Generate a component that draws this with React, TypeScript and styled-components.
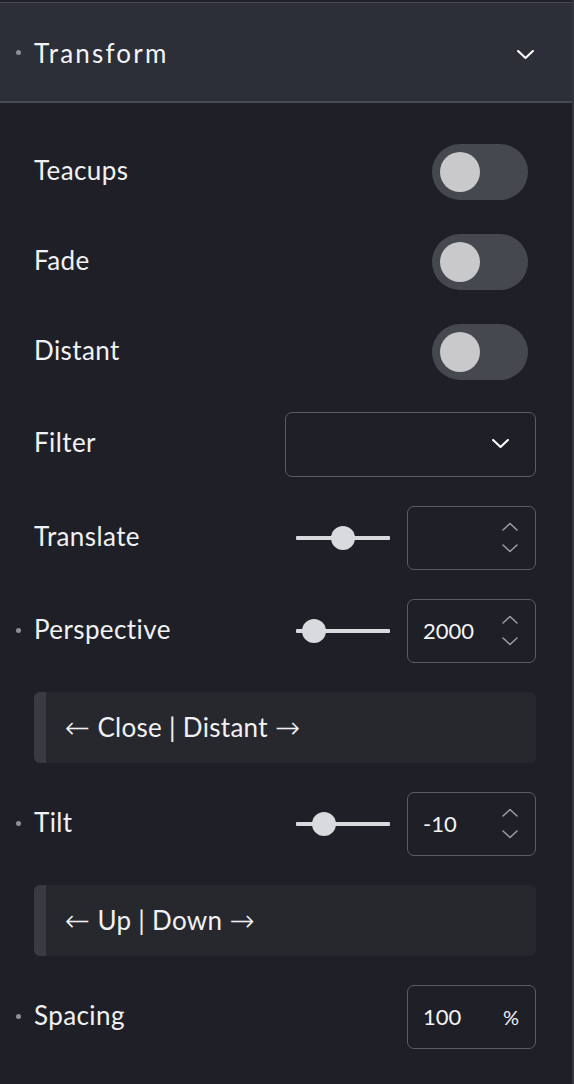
import React from "react";
import styled, { createGlobalStyle } from "styled-components";

const Global = createGlobalStyle`
  html, body { margin: 0; padding: 0; background: #1f2027; }
  body { font-family: Lato, "Noto Sans", sans-serif; color: #f1f1f3; }
  * { box-sizing: border-box; }
`;

const Panel = styled.div`
  width: 574px;
  min-height: 1084px;
  padding-top: 2px;
  background: #1f2027;
  border-right: 2px solid #34363d;
`;

const Header = styled.div`
  height: 101px;
  display: flex;
  align-items: center;
  background: #2c2f37;
  border-top: 1px solid #474a52;
  border-bottom: 2px solid #474a52;
  padding: 0 38px 0 0;
`;

const Bullet = styled.span<{ $hidden?: boolean }>`
  width: 34px;
  display: flex;
  justify-content: center;
  padding-left: 3px;
  flex: none;
  &::before {
    content: "";
    width: 5px;
    height: 5px;
    border-radius: 50%;
    background: ${(p) => (p.$hidden ? "transparent" : "#8e9096")};
  }
`;

const HeaderTitle = styled.span`
  flex: 1;
  font-size: 26px;
  letter-spacing: 2.2px;
  color: #f4f4f6;
  line-height: 1;
  padding-top: 2px;
`;

const HeaderChevron = styled.span`
  display: flex;
  padding-top: 5px;
`;

const Body = styled.div`
  display: flex;
  flex-direction: column;
  gap: 29px;
  padding: 38.5px 36px 0 0;
`;

const Row = styled.div<{ $h?: number }>`
  display: flex;
  align-items: center;
  height: ${(p) => p.$h ?? 64}px;
`;

const Label = styled.span`
  flex: 1;
  font-size: 26px;
  letter-spacing: 0.4px;
  color: #f1f1f3;
  line-height: 1;
  padding-bottom: 4px;
`;

const ToggleTrack = styled.div`
  width: 96px;
  height: 56px;
  margin-right: 8px;
  border-radius: 28px;
  background: #45484f;
  display: flex;
  align-items: center;
  padding-left: 8px;
`;

const ToggleKnob = styled.div`
  width: 40px;
  height: 40px;
  border-radius: 50%;
  background: #c9c9cb;
`;

const Select = styled.div`
  width: 251px;
  height: 65px;
  border: 1.5px solid #5b5d63;
  border-radius: 7px;
  display: flex;
  align-items: center;
  justify-content: flex-end;
  padding-right: 26px;
`;

const SliderWrap = styled.div`
  position: relative;
  width: 94px;
  height: 24px;
  margin-right: 17px;
  display: flex;
  align-items: center;
`;

const SliderTrack = styled.div`
  width: 100%;
  height: 4px;
  background: #d9dadd;
  border-radius: 1px;
`;

const SliderKnob = styled.div`
  position: absolute;
  top: 0;
  width: 24px;
  height: 24px;
  border-radius: 50%;
  background: #d9dadd;
`;

const NumberBox = styled.div`
  width: 129px;
  height: 64px;
  border: 1.5px solid #5b5d63;
  border-radius: 7px;
  display: flex;
  align-items: center;
  padding: 0 16px 0 15px;
`;

const NumberValue = styled.span`
  flex: 1;
  font-size: 22px;
  color: #f4f4f6;
  line-height: 1;
`;

const Unit = styled.span`
  font-size: 20px;
  color: #f1f1f3;
`;

const Spinner = styled.div`
  display: flex;
  flex-direction: column;
  gap: 13px;
  width: 18px;
  align-items: center;
`;

const Note = styled.div`
  margin-left: 34px;
  height: 71px;
  display: flex;
  align-items: center;
  background: #27282d;
  border-radius: 6px;
  border-left: 12px solid #3a3b41;
  padding-left: 19px;
  font-size: 26px;
  letter-spacing: 0.3px;
  color: #f1f1f3;
  white-space: pre;
`;

const Arrow = styled.span`
  font-family: "DejaVu Sans", sans-serif;
  font-weight: 200;
  font-size: 30px;
  line-height: 1;
  padding-top: 2px;
`;

const Chevron = ({ up = false, color = "#ffffff", w = 17 }: { up?: boolean; color?: string; w?: number }) => (
  <svg width={w} height={w / 2 + 1} viewBox="0 0 16 9" fill="none">
    <path
      d={up ? "M1 8 L8 1.5 L15 8" : "M1 1 L8 7.5 L15 1"}
      stroke={color}
      strokeWidth={color !== "#ffffff" ? 1.5 : 2}
      strokeLinecap="round"
      strokeLinejoin="round"
    />
  </svg>
);

const Toggle = () => (
  <ToggleTrack>
    <ToggleKnob />
  </ToggleTrack>
);

const Slider = ({ pos }: { pos: number }) => (
  <SliderWrap>
    <SliderTrack />
    <SliderKnob style={{ left: `${pos}px` }} />
  </SliderWrap>
);

const NumberInput = ({ value, unit }: { value: string; unit?: string }) => (
  <NumberBox>
    <NumberValue>{value}</NumberValue>
    {unit ? (
      <Unit>{unit}</Unit>
    ) : (
      <Spinner>
        <Chevron up color="#9c9ea3" w={16} />
        <Chevron color="#9c9ea3" w={16} />
      </Spinner>
    )}
  </NumberBox>
);

const NoteText = ({ left, right }: { left: string; right: string }) => (
  <Note>
    <Arrow>←</Arrow>
    {` ${left} | ${right} `}
    <Arrow>→</Arrow>
  </Note>
);

export default function App() {
  return (
    <>
      <Global />
      <Panel>
        <Header>
          <Bullet />
          <HeaderTitle>Transform</HeaderTitle>
          <HeaderChevron>
            <Chevron w={17} />
          </HeaderChevron>
        </Header>
        <Body>
          <Row $h={61}>
            <Bullet $hidden />
            <Label>Teacups</Label>
            <Toggle />
          </Row>
          <Row $h={61}>
            <Bullet $hidden />
            <Label>Fade</Label>
            <Toggle />
          </Row>
          <Row $h={61}>
            <Bullet $hidden />
            <Label>Distant</Label>
            <Toggle />
          </Row>
          <Row $h={65}>
            <Bullet $hidden />
            <Label>Filter</Label>
            <Select>
              <Chevron w={17} />
            </Select>
          </Row>
          <Row>
            <Bullet $hidden />
            <Label>Translate</Label>
            <Slider pos={35} />
            <NumberInput value="" />
          </Row>
          <Row>
            <Bullet />
            <Label>Perspective</Label>
            <Slider pos={6} />
            <NumberInput value="2000" />
          </Row>
          <NoteText left="Close" right="Distant" />
          <Row>
            <Bullet />
            <Label>Tilt</Label>
            <Slider pos={16} />
            <NumberInput value="-10" />
          </Row>
          <NoteText left="Up" right="Down" />
          <Row>
            <Bullet />
            <Label>Spacing</Label>
            <NumberInput value="100" unit="%" />
          </Row>
        </Body>
      </Panel>
    </>
  );
}
